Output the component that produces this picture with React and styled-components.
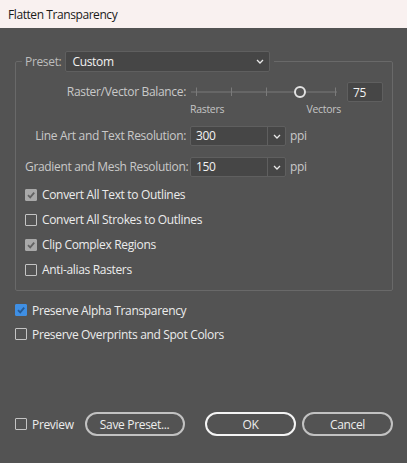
import React from 'react';
import styled, { createGlobalStyle } from 'styled-components';

const FONT = `"Segoe UI", "Open Sans", "Noto Sans", sans-serif`;

const Global = createGlobalStyle`
  html, body { margin: 0; padding: 0; background: #535353; }
  body { font-family: ${FONT}; font-size: 12px; letter-spacing: -0.33px; }
  * { box-sizing: border-box; }
`;

const Window = styled.div`
  width: 407px;
  height: 463px;
  display: flex;
  flex-direction: column;
  background: #535353;
  overflow: hidden;
`;

const TitleBar = styled.div`
  height: 28px;
  flex: none;
  background: #f9f1f0;
  color: #1a1a1a;
  display: flex;
  align-items: center;
  padding-left: 8px;
  font-size: 12px;
  letter-spacing: -0.42px;
`;

const Body = styled.div`
  flex: 1;
  display: flex;
  flex-direction: column;
  padding: 23px 14px 27px 15px;
`;

const Group = styled.fieldset`
  margin: 0;
  border: 1px solid #696969;
  border-radius: 2px;
  padding: 0 9px 8px 9px;
  min-width: 0;
`;

const Legend = styled.legend`
  padding: 0 4px 0 3px;
  margin-left: -3px;
  display: flex;
  align-items: center;
  gap: 4px;
`;

const Label = styled.span`
  color: ${p => p.$dim ? '#bdbdbd' : '#c9c9c9'};
  white-space: nowrap;
  line-height: 16px;
`;

const SelectBox = styled.div`
  width: ${p => p.$w}px;
  height: ${p => p.$h || 20}px;
  background: #464646;
  border: 1px solid #5f5f5f;
  border-radius: 2px;
  display: flex;
  align-items: center;
  color: #f2f2f2;
`;

const SelectValue = styled.span`
  flex: 1;
  padding-left: ${p => p.$pad || 5}px;
  line-height: 16px;
`;

const Arrow = styled.span`
  width: ${p => p.$w}px;
  height: 100%;
  display: flex;
  align-items: center;
  justify-content: center;
  border-left: ${p => p.$divider ? '1px solid #5f5f5f' : 'none'};
`;

const Chevron = () => (
  <svg width="8" height="5" viewBox="0 0 8 5">
    <polyline points="1,1 4,4 7,1" fill="none" stroke="#e8e8e8" strokeWidth="1.3" />
  </svg>
);

const FormRow = styled.div`
  display: flex;
  align-items: center;
  gap: 4px;
  margin-top: ${p => p.$mt || 0}px;
`;

const RowLabel = styled(Label)`
  width: 161px;
  text-align: right;
`;

const NumberBox = styled.div`
  width: 36px;
  height: 20px;
  margin-left: 1px;
  background: #464646;
  border: 1px solid #5f5f5f;
  border-radius: 2px;
  color: #f2f2f2;
  padding-left: 5px;
  display: flex;
  align-items: center;
`;

const ScaleLabels = styled.div`
  margin-left: 165px;
  width: 151px;
  display: flex;
  justify-content: space-between;
  font-size: 10.5px;
  letter-spacing: -0.3px;
  line-height: 14px;
  color: #c4c4c4;
`;

const Unit = styled.span`
  color: #c9c9c9;
  line-height: 16px;
`;

const CheckRow = styled.label`
  display: flex;
  align-items: center;
  gap: 5px;
  height: ${p => p.$h || 25}px;
  color: #ececec;
  white-space: nowrap;
`;

const Box = styled.span`
  width: 12px;
  height: 12px;
  flex: none;
  border-radius: 1px;
  display: flex;
  align-items: center;
  justify-content: center;
  border: 1px solid ${p => p.$state === 'off' ? '#c4c4c4' : p.$state === 'blue' ? '#3f8fe4' : '#a9a9a9'};
  background: ${p => p.$state === 'off' ? 'transparent' : p.$state === 'blue' ? '#3f8fe4' : '#a9a9a9'};
`;

const Check = ({ state }) => {
  if (state === 'off') return <Box $state="off" />;
  const c = state === 'blue' ? '#245a96' : '#626262';
  return (
    <Box $state={state}>
      <svg width="10" height="10" viewBox="0 0 10 10">
        <polyline points="2,5.2 4.2,7.4 8.2,2.6" fill="none" stroke={c} strokeWidth="1.8" />
      </svg>
    </Box>
  );
};

const CheckList = styled.div`
  margin-top: 5px;
  display: flex;
  flex-direction: column;
`;

const Outer = styled.div`
  margin-top: 7px;
  display: flex;
  flex-direction: column;
`;

const Spacer = styled.div`
  flex: 1;
`;

const ButtonRow = styled.div`
  display: flex;
  align-items: center;
  height: 24px;
`;

const PreviewCheck = styled(CheckRow)`
  margin-right: 11px;
`;

const Button = styled.button`
  height: 24px;
  width: ${p => p.$w}px;
  margin-left: ${p => p.$ml || '0'};
  border-radius: 12px;
  background: transparent;
  border: 2px solid ${p => p.$primary ? '#f4f4f4' : '#c2c2c2'};
  color: #ededed;
  font-family: ${FONT};
  font-size: 12px;
  letter-spacing: -0.33px;
  padding: 0;
  display: flex;
  align-items: center;
  justify-content: center;
`;

const Slider = () => (
  <svg width="152" height="20" viewBox="0 0 152 20">
    <line x1="1" y1="10" x2="147" y2="10" stroke="#7a7a7a" strokeWidth="1" />
    {[6, 41, 76, 145].map(x => (
      <line key={x} x1={x + 0.5} y1="5.5" x2={x + 0.5} y2="14" stroke="#7a7a7a" strokeWidth="1" />
    ))}
    <circle cx="110" cy="10" r="5" fill="#535353" stroke="#e2e2e2" strokeWidth="2" />
  </svg>
);

export default function App() {
  return (
    <>
      <Global />
      <Window>
        <TitleBar>Flatten Transparency</TitleBar>
        <Body>
          <Group>
            <Legend>
              <Label $dim>Preset:</Label>
              <SelectBox $w={205} $h={21}>
                <SelectValue $pad={6}>Custom</SelectValue>
                <Arrow $w={18}><Chevron /></Arrow>
              </SelectBox>
            </Legend>

            <FormRow $mt={10}>
              <RowLabel>Raster/Vector Balance:</RowLabel>
              <Slider />
              <NumberBox>75</NumberBox>
            </FormRow>
            <ScaleLabels>
              <span>Rasters</span>
              <span>Vectors</span>
            </ScaleLabels>

            <FormRow $mt={10}>
              <RowLabel>Line Art and Text Resolution:</RowLabel>
              <SelectBox $w={96}>
                <SelectValue>300</SelectValue>
                <Arrow $w={18} $divider><Chevron /></Arrow>
              </SelectBox>
              <Unit>ppi</Unit>
            </FormRow>
            <FormRow $mt={11}>
              <RowLabel>Gradient and Mesh Resolution:</RowLabel>
              <SelectBox $w={96}>
                <SelectValue>150</SelectValue>
                <Arrow $w={18} $divider><Chevron /></Arrow>
              </SelectBox>
              <Unit>ppi</Unit>
            </FormRow>

            <CheckList>
              <CheckRow><Check state="gray" />Convert All Text to Outlines</CheckRow>
              <CheckRow><Check state="off" />Convert All Strokes to Outlines</CheckRow>
              <CheckRow><Check state="gray" />Clip Complex Regions</CheckRow>
              <CheckRow><Check state="off" />Anti-alias Rasters</CheckRow>
            </CheckList>
          </Group>

          <Outer>
            <CheckRow $h={24}><Check state="blue" />Preserve Alpha Transparency</CheckRow>
            <CheckRow $h={24}><Check state="off" />Preserve Overprints and Spot Colors</CheckRow>
          </Outer>

          <Spacer />

          <ButtonRow>
            <PreviewCheck $h={24}><Check state="off" />Preview</PreviewCheck>
            <Button $w={100}>Save Preset...</Button>
            <Button $w={91} $ml="auto" $primary>OK</Button>
            <Button $w={91} $ml="6px">Cancel</Button>
          </ButtonRow>
        </Body>
      </Window>
    </>
  );
}
